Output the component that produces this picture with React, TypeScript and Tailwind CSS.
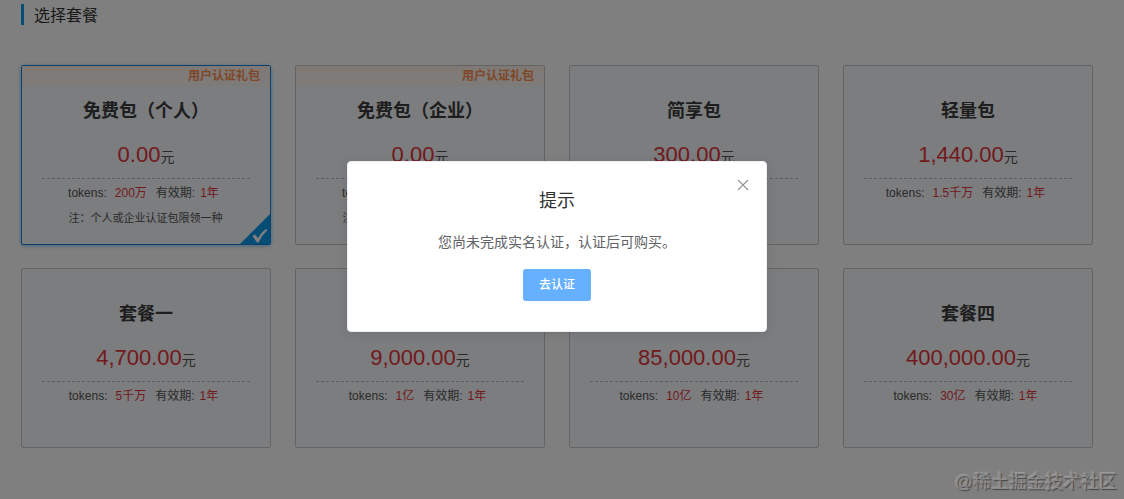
import React from "react"
import clsx from "clsx"

interface Package {
  name: string
  price: string
  tokens: string
  gift?: boolean
  selected?: boolean
}

const packages: Package[] = [
  { name: "免费包（个人）", price: "0.00", tokens: "200万", gift: true, selected: true },
  { name: "免费包（企业）", price: "0.00", tokens: "200万", gift: true },
  { name: "简享包", price: "300.00", tokens: "200万" },
  { name: "轻量包", price: "1,440.00", tokens: "1.5千万" },
  { name: "套餐一", price: "4,700.00", tokens: "5千万" },
  { name: "套餐二", price: "9,000.00", tokens: "1亿" },
  { name: "套餐三", price: "85,000.00", tokens: "10亿" },
  { name: "套餐四", price: "400,000.00", tokens: "30亿" },
]

function SelectedMark() {
  return (
    <svg className="absolute right-0 bottom-0" width="30" height="30" viewBox="0 0 30 30">
      <path d="M30 0V30H0Z" fill="#0a9bea" />
      <path d="M12.5 22L15 20.5L18 24Q21 18.5 26 15L27.5 16Q22 21 18.5 28.5H17Z" fill="#fff" />
    </svg>
  )
}

function PackageCard({ name, price, tokens, gift, selected }: Package) {
  return (
    <div
      className={clsx(
        "relative h-[180px] rounded-xs border bg-[#f7fafd] px-5 text-center",
        selected ? "border-[#1682d8] shadow-[0_1px_4px_#8cc8f0]" : "border-[#c8c8c8]"
      )}
    >
      <div
        className={clsx(
          "-mx-5 h-5 pr-2.5 text-right text-xs leading-5 font-bold text-[#ff8d4f]",
          gift && "bg-linear-to-b from-[#fff3ea] to-[#fbf7f4]"
        )}
      >
        {gift && "用户认证礼包"}
      </div>
      <h3 className="mt-[11px] text-lg leading-7 font-bold text-[#3c3c3c]">{name}</h3>
      <p className="mt-[15px] h-[39px] border-b border-dashed border-[#bbb] text-sm leading-[30px] text-[#555]">
        <span className="text-[22px] text-[#e5353b]">{price}</span>元
      </p>
      <p className="flex justify-center pt-1 pr-[5px] text-xs leading-5 text-[#555]">
        <span>tokens:</span>
        <span className="ml-2 text-[#e5353b]">{tokens}</span>
        <span className="ml-[9px]">有效期:</span>
        <span className="ml-[5px] text-[#e5353b]">1年</span>
      </p>
      {gift && (
        <p className="mt-[5px] pr-px text-[11px] leading-5 text-[#555]">注：个人或企业认证包限领一种</p>
      )}
      {selected && <SelectedMark />}
    </div>
  )
}

function Dialog() {
  return (
    <div className="absolute inset-0 flex items-start justify-center bg-black/50 pt-[161px] pr-2.5">
      <div className="relative h-[171px] w-[420px] rounded-sm border border-[#ebeef5] bg-white text-center shadow-[0_2px_12px_rgba(0,0,0,0.1)]">
        <button className="absolute top-[17px] right-[17px]">
          <svg width="12" height="12" viewBox="0 0 12 12" stroke="#909399" strokeWidth="1.1">
            <path d="M1 1L11 11M11 1L1 11" />
          </svg>
        </button>
        <h2 className="mt-[27px] text-lg leading-6 text-[#303133]">提示</h2>
        <p className="mt-[17px] text-sm leading-6 text-[#606266]">您尚未完成实名认证，认证后可购买。</p>
        <button className="mt-[15px] h-8 w-[68px] rounded-[3px] bg-[#66b1ff] text-xs font-medium text-white">
          去认证
        </button>
      </div>
    </div>
  )
}

export default function App() {
  return (
    <div className="relative h-[499px] w-[1124px] overflow-hidden bg-white pt-1 pl-[21px] font-['Liberation_Sans','Noto_Sans_CJK_SC',sans-serif]">
      <h1 className="h-[21px] border-l-3 border-[#0a9bea] pl-2.5 text-base leading-6 text-[#333]">
        选择套餐
      </h1>
      <div className="mt-10 grid grid-cols-[repeat(4,250px)] gap-x-6 gap-y-[23px]">
        {packages.map((item) => (
          <PackageCard key={item.name} {...item} />
        ))}
      </div>
      <Dialog />
      <span className="absolute right-[7px] bottom-[3px] text-lg leading-7 text-[#8a8a8a] [text-shadow:1px_1px_1px_#444,-1px_-1px_1px_#a0a0a0]">
        @稀土掘金技术社区
      </span>
    </div>
  )
}
